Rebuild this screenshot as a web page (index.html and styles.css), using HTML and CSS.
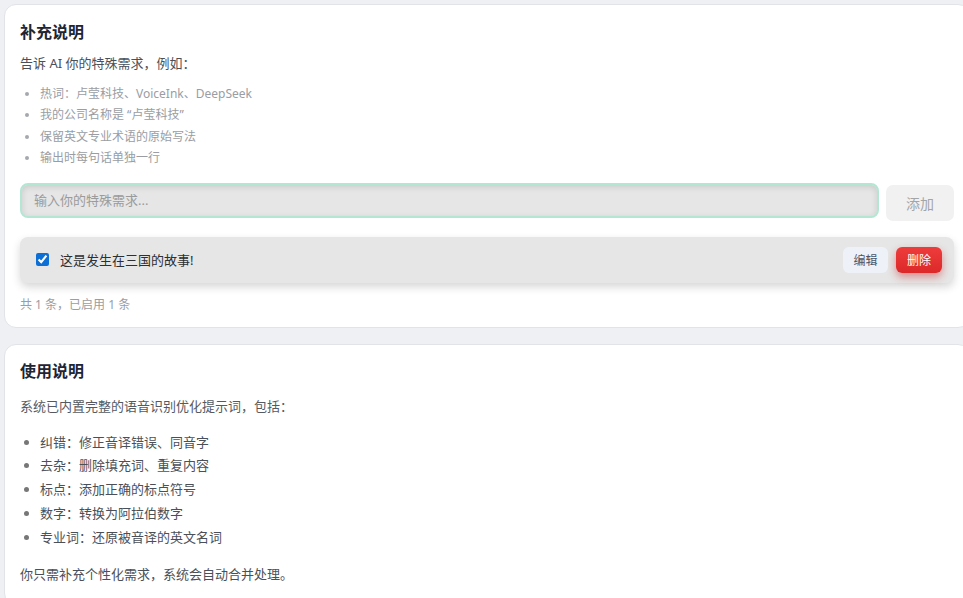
FILE: index.html
```html
<!DOCTYPE html>
<html lang="zh-CN">
<head>
<meta charset="utf-8">
<title>补充说明</title>
<link rel="stylesheet" href="styles.css">
</head>
<body>
<div class="page">
  <section class="card card-custom">
    <h2 class="card-title">补充说明</h2>
    <p class="desc">告诉 AI 你的特殊需求，例如：</p>
    <ul class="examples">
      <li>热词：卢莹科技、VoiceInk、DeepSeek</li>
      <li>我的公司名称是 “卢莹科技”</li>
      <li>保留英文专业术语的原始写法</li>
      <li>输出时每句话单独一行</li>
    </ul>
    <div class="add-row">
      <input class="add-input" type="text" placeholder="输入你的特殊需求...">
      <button class="btn-add" type="button">添加</button>
    </div>
    <div class="item">
      <input class="item-check" type="checkbox" checked>
      <span class="item-text">这是发生在三国的故事!</span>
      <div class="item-actions">
        <button class="btn-edit" type="button">编辑</button>
        <button class="btn-delete" type="button">删除</button>
      </div>
    </div>
    <p class="count">共 1 条，已启用 1 条</p>
  </section>

  <section class="card card-help">
    <h2 class="card-title">使用说明</h2>
    <p class="help-desc">系统已内置完整的语音识别优化提示词，包括：</p>
    <ul class="features">
      <li>纠错：修正音译错误、同音字</li>
      <li>去杂：删除填充词、重复内容</li>
      <li>标点：添加正确的标点符号</li>
      <li>数字：转换为阿拉伯数字</li>
      <li>专业词：还原被音译的英文名词</li>
    </ul>
    <p class="help-note">你只需补充个性化需求，系统会自动合并处理。</p>
  </section>
</div>
</body>
</html>
```

FILE: styles.css
```css
html, body {
  margin: 0;
  padding: 0;
  overflow: hidden;
  background: #eff0f3;
}

body {
  font-family: "Noto Sans", "Noto Sans CJK SC", sans-serif;
  color: #333;
}

.page {
  padding: 4px;
  width: 1000px;
}

.card {
  background: #fff;
  border: 1px solid #e1e3e8;
  border-radius: 12px;
  padding: 16px 15px 16px 15px;
  width: 934px;
}

.card-custom {
  padding-top: 15px;
  padding-bottom: 14px;
}

.card-help {
  margin-top: 16px;
  padding-top: 14px;
  padding-bottom: 20px;
}

.card-title {
  margin: 0;
  font-size: 16px;
  line-height: 24px;
  font-weight: 700;
  color: #1e2533;
}

.desc {
  margin: 9px 0 0;
  font-size: 13px;
  line-height: 20px;
  color: #4b5058;
}

.examples {
  margin: 10px 0 0;
  padding-left: 20px;
  font-size: 12px;
  line-height: 21.4px;
  color: #9a9da3;
}

.examples li::marker {
  color: #a5a8ad;
}

.add-row {
  display: flex;
  align-items: flex-start;
  gap: 7px;
  margin-top: 14px;
}

.add-input {
  flex: 1;
  height: 35px;
  box-sizing: border-box;
  border: 2px solid #b3e6d3;
  border-radius: 8px;
  background: #e6e6e6;
  box-shadow: inset 0 2px 6px rgba(0, 0, 0, 0.12);
  padding: 0 12px;
  font-family: inherit;
  font-size: 13px;
  color: #333;
  outline: none;
}

.add-input::placeholder {
  color: #9b9b9b;
}

.btn-add {
  margin-top: 2px;
  height: 36px;
  width: 68px;
  border: none;
  border-radius: 7px;
  background: #f1f1f2;
  color: #a3a5a8;
  font-family: inherit;
  font-size: 14px;
}

.item {
  display: flex;
  align-items: center;
  margin-top: 16px;
  height: 46px;
  box-sizing: border-box;
  padding: 0 12px 0 16px;
  background: #e6e6e6;
  border-radius: 8px;
  box-shadow: 0 4px 8px rgba(0, 0, 0, 0.16);
}

.item-check {
  width: 13px;
  height: 13px;
  margin: 0 11px 0 0;
  accent-color: #0b6fd6;
}

.item-text {
  flex: 1;
  font-size: 13px;
  line-height: 20px;
  color: #2d2f33;
}

.item-actions {
  display: flex;
  gap: 8px;
}

.btn-edit,
.btn-delete {
  height: 26px;
  width: 46px;
  border: none;
  border-radius: 6px;
  font-family: inherit;
  font-size: 12px;
  padding: 0;
}

.btn-edit {
  width: 45px;
  background: #eef2f8;
  color: #4a5568;
}

.btn-delete {
  background: linear-gradient(180deg, #ee3c3c, #dc2828);
  color: #fff;
  box-shadow: 0 4px 8px rgba(200, 30, 30, 0.45);
}

.count {
  margin: 14px 0 0;
  font-size: 12px;
  line-height: 16px;
  color: #9a9da3;
}

.help-desc {
  margin: 13px 0 0;
  font-size: 13px;
  line-height: 20px;
  color: #555a62;
}

.features {
  margin: 15px 0 0;
  padding-left: 20px;
  font-size: 13px;
  line-height: 23.8px;
  color: #4b5058;
}

.features li::marker {
  color: #777;
}

.help-note {
  margin: 14px 0 0;
  font-size: 13px;
  line-height: 20px;
  color: #4b5058;
}
```
